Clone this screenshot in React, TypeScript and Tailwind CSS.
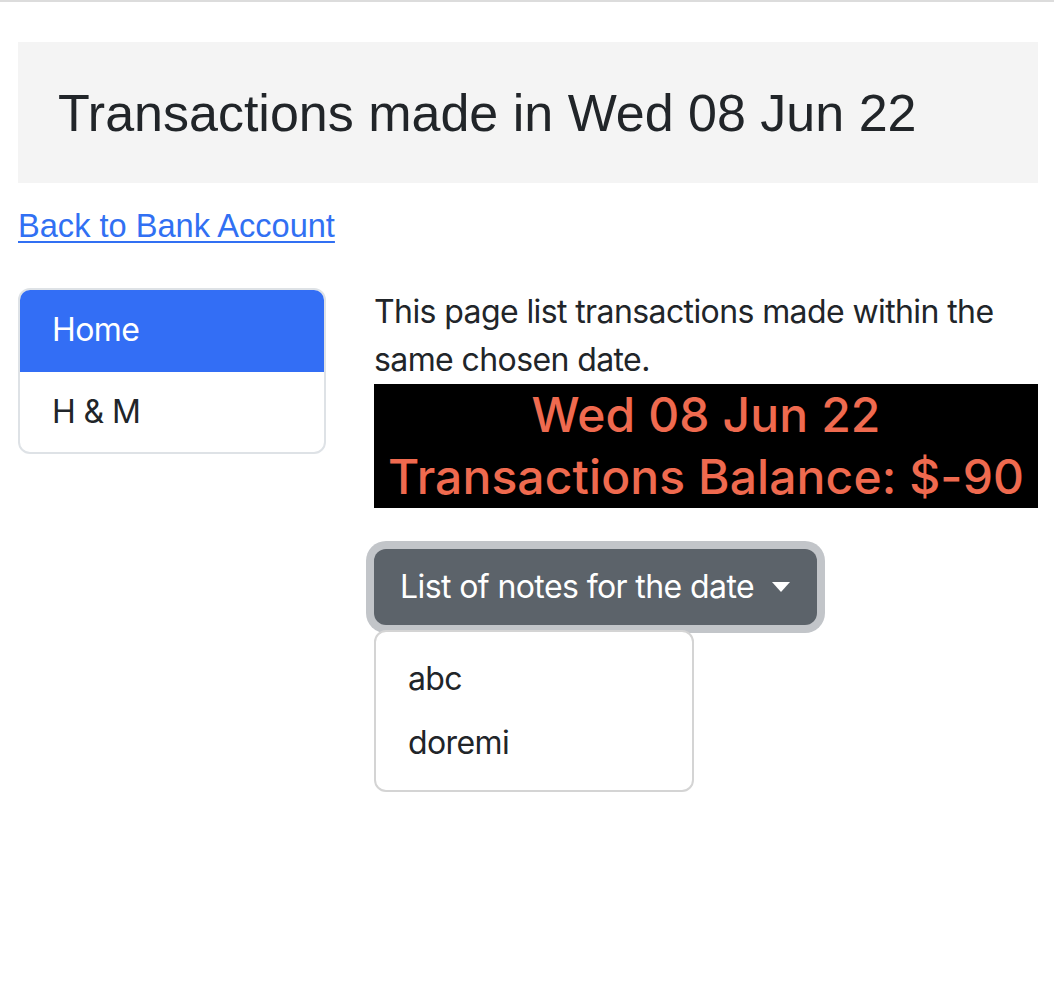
import { useState } from 'react';

const notes = ['abc', 'doremi'];

export default function App() {
  const [open, setOpen] = useState(true);

  return (
    <div className="min-h-[988px] border-t-2 border-[#dcdcdc] bg-white font-['Inter',sans-serif] text-[32px] leading-[48px] tracking-[-0.6px] text-[#212529]">
      <div className="pt-[40px] pr-[16px] pl-[18px]">
        {/* Jumbotron */}
        <div className="flex h-[141px] items-center bg-[#f4f4f4] px-[40px]">
          <h1 className="font-['Liberation_Sans',Arial,sans-serif] text-[52px] leading-[60px] font-normal tracking-normal">
            Transactions made in Wed 08 Jun 22
          </h1>
        </div>

        <div className="mt-[23px] font-['Liberation_Sans',Arial,sans-serif] text-[32.6px] leading-[40px] tracking-normal">
          <a href="#" className="text-[#3170f3] underline decoration-2 underline-offset-4">
            Back to Bank Account
          </a>
        </div>

        <div className="mt-[42px] flex gap-[48px]">
          {/* Sidebar */}
          <div className="w-[308px] shrink-0">
            <div className="overflow-hidden rounded-[12px] border-2 border-[#dee2e6]">
              <div className="-mx-[2px] -mt-[2px] bg-[#336ef5] px-[34px] py-[18px] text-white">Home</div>
              <div className="px-[32px] py-[16px]">H &amp; M</div>
            </div>
          </div>

          {/* Content */}
          <div className="flex-1">
            <p>This page list transactions made within the same chosen date.</p>
            <div className="bg-black text-center text-[48px] leading-[62px] font-medium tracking-[0.1px] text-[#ef6a4f]">
              <div>Wed 08 Jun 22</div>
              <div>Transactions Balance: $-90</div>
            </div>

            <div className="relative mt-[41px]">
              <button
                onClick={() => setOpen(!open)}
                className="flex h-[76px] items-center gap-[18px] rounded-[12px] bg-[#5c636a] pr-[27px] pl-[26px] text-white ring-[8px] ring-[#c2c5c9]"
              >
                <span>List of notes for the date</span>
                <svg width="18" height="10" viewBox="0 0 18 10">
                  <path d="M0 0h18L9 10z" fill="white" />
                </svg>
              </button>
              {open && (
                <ul className="absolute top-[81px] left-0 w-[320px] rounded-[12px] border-2 border-[#d4d4d4] bg-white py-[15px]">
                  {notes.map((n) => (
                    <li key={n} className="px-[32px] py-[8px]">{n}</li>
                  ))}
                </ul>
              )}
            </div>
          </div>
        </div>
      </div>
    </div>
  );
}
